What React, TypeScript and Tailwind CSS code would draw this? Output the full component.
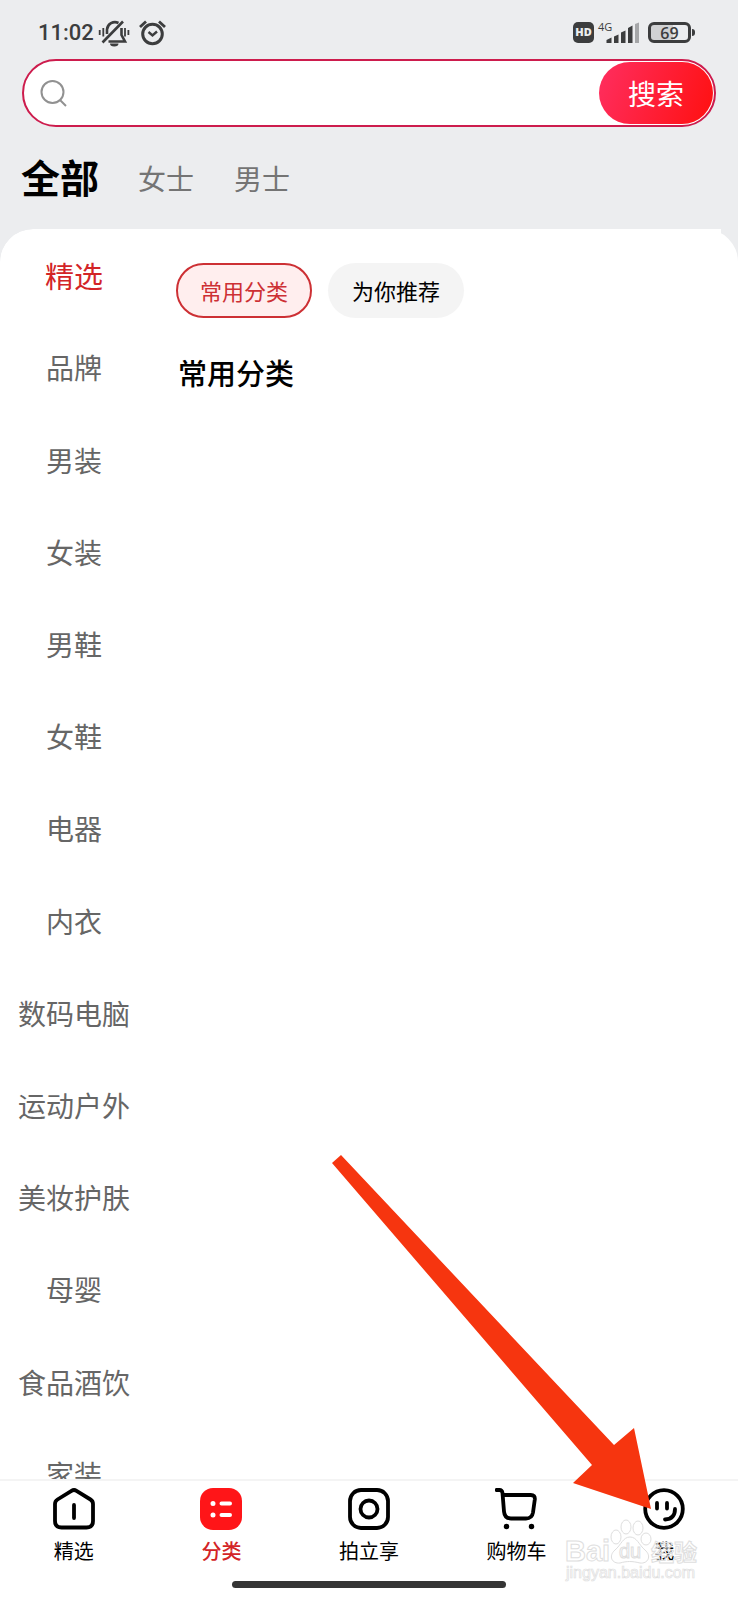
import { ReactNode } from "react";

const CATEGORIES = [
    "精选",
    "品牌",
    "男装",
    "女装",
    "男鞋",
    "女鞋",
    "电器",
    "内衣",
    "数码电脑",
    "运动户外",
    "美妆护肤",
    "母婴",
    "食品酒饮",
    "家装",
];

function StatusBar() {
    return (
        <div className="flex h-[59px] items-center justify-between pt-[6px] pr-[43px] pl-[38px] text-[#3c3d3e]">
            <div className="flex items-center">
                <span className="w-[60px] font-['Roboto'] text-[22px] leading-6 font-medium">11:02</span>
                <svg width="32" height="28" viewBox="98 18 32 28" fill="none" stroke="currentColor" strokeWidth="2.6">
                    <path d="M107 33V28.500a8 8 0 0 1 11.500-6.500M121.500 27v7l3.500 6.500h-16.500M102.500 41.500L123 20.500" />
                    <path d="M99.700 29v5M103.300 27v8.500M125 27v8.500M128.400 29v5" strokeWidth="1.8" />
                    <path d="M110 42.500h8.500a4.200 3 0 0 1-8.500 0z" fill="currentColor" stroke="none" />
                </svg>
                <svg className="ml-2" width="28" height="28" viewBox="138 18 28 28" fill="none" stroke="currentColor" strokeWidth="3">
                    <circle cx="152.500" cy="33" r="9.800" />
                    <path d="M148.500 31l4 3.500 4.500-4" strokeWidth="2.4" />
                    <path d="M140 26l6-5.500M159 20.500l6 5.500" strokeWidth="2.8" />
                </svg>
            </div>
            <div className="flex items-center">
                <span className="flex h-[21px] w-[21px] items-center justify-center rounded-[5px] bg-[#3c3d3e] font-['Open_Sans'] text-[11px] font-extrabold text-[#ecedef]">
                    HD
                </span>
                <span className="ml-1 mb-3 w-4 font-['Open_Sans'] text-[11px] leading-3 font-medium">4G</span>
                <svg className="-ml-2" width="34" height="21" viewBox="606 22 34 21" fill="currentColor">
                    <path d="M606.500 40l5-2.500V43h-5zM614 36.500l4.500-2V43H614zM621 32.500l4.500-2V43H621zM628 28l4.500-2.500V43H628z" />
                    <path d="M635 24l4-1.500V43h-4z" opacity="0.4" />
                </svg>
                <span className="ml-2 flex h-[21px] w-[43px] items-center justify-center rounded-md border-[3px] border-current bg-linear-to-r from-[#d0d1d3] from-60% to-[#ecedef] to-60% font-['Open_Sans'] text-base leading-4 font-semibold">
                    69
                </span>
                <span className="ml-px h-[7px] w-[3px] rounded-r-sm bg-[#3c3d3e]" />
            </div>
        </div>
    );
}

function SearchBar() {
    return (
        <form
            className="mx-[22px] flex h-[68px] items-center rounded-full border-2 border-[#cd1c4d] bg-white p-px pl-4"
            onSubmit={(e) => e.preventDefault()}
        >
            <svg width="28" height="28" viewBox="0 0 28 28" fill="none" stroke="#919191" strokeWidth="2">
                <circle cx="12.500" cy="13" r="11" />
                <path d="M20 21l6 6" />
            </svg>
            <input type="search" aria-label="搜索" className="h-full min-w-0 flex-1 bg-transparent px-3 text-[28px] outline-none" />
            <button
                type="submit"
                className="h-full w-[114px] rounded-full bg-linear-[110deg] from-[#ff2e60] to-[#ff1010] text-[28px] leading-8 text-white"
            >
                搜索
            </button>
        </form>
    );
}

function NavItem({ label, active = false, children }: { label: string; active?: boolean; children: ReactNode }) {
    return (
        <a
            href="#"
            className={
                active
                    ? "flex flex-1 flex-col items-center gap-[7px] text-xl leading-7 font-medium text-[#d32427]"
                    : "flex flex-1 flex-col items-center gap-[7px] text-xl leading-7 text-black"
            }
        >
            <svg width="44" height="42" viewBox="0 0 44 42" fill="none" stroke="#000" strokeWidth="3.8" strokeLinecap="round" strokeLinejoin="round">
                {children}
            </svg>
            {label}
        </a>
    );
}

function BottomNav() {
    return (
        <nav className="border-t-2 border-[#f4f4f4] bg-white pt-[7px]">
            <div className="flex">
                <NavItem label="精选">
                    <path d="M19.500 2.800L5.500 11.500Q3 13 3 16v17q0 6.500 6.500 6.500h25q6.500 0 6.500-6.500V16q0-3-2.500-4.500L24.500 2.800q-2.500-1.600-5 0z" />
                    <path d="M22 17v13" />
                </NavItem>
                <NavItem label="分类" active>
                    <rect x="1" y="0" width="42" height="42" rx="13" fill="#ff1518" stroke="none" />
                    <path d="M22.500 15.500h8.500M22.500 27h8.500" stroke="#fff" strokeWidth="4" />
                    <path d="M14 15.500h0M14 27h0" stroke="#fff" strokeWidth="5" />
                </NavItem>
                <NavItem label="拍立享">
                    <rect x="3" y="2" width="38" height="38" rx="11" />
                    <circle cx="22" cy="21" r="8.500" />
                </NavItem>
                <NavItem label="购物车">
                    <path d="M1.500 2h3q2.500 0 3 3l1.500 18.500q.6 7 7 7h15q6 0 7-6l1.800-13q.5-4.500-4-4.500H9" />
                    <path d="M11.500 38.500h0M36.500 38.500h0" strokeWidth="5.500" />
                </NavItem>
                <NavItem label="我">
                    <circle cx="22" cy="21" r="18.800" />
                    <path d="M15 15v5.500M25 15v5.500M33 21q0 10-10 10.500" />
                </NavItem>
            </div>
            <div className="mx-auto mt-4 mb-3 h-[7px] w-[37%] rounded-full bg-[#353535]" />
        </nav>
    );
}

function Watermark() {
    return (
        <svg
            className="pointer-events-none absolute right-[38px] bottom-4"
            width="136"
            height="66"
            viewBox="564 1518 136 66"
            fill="#fff"
            fillOpacity="0.5"
            stroke="#dedede"
            strokeWidth="1"
            aria-hidden="true"
        >
            <ellipse cx="616" cy="1537" rx="5" ry="7" />
            <ellipse cx="626" cy="1527" rx="5" ry="7" />
            <ellipse cx="638" cy="1528" rx="5" ry="7" />
            <ellipse cx="646" cy="1539" rx="5" ry="6" />
            <path d="M630 1537c7 0 9 8 15 13 7 6 3 14-5 13-8-2-13-2-20 0-8 1-12-7-5-13 6-5 8-13 15-13z" />
            <text x="565" y="1561" fontFamily="Liberation Sans" fontWeight="700" fontSize="29">Bai</text>
            <text x="619" y="1558" fontFamily="Liberation Sans" fontSize="20">du</text>
            <text x="651" y="1561" fontFamily="Noto Sans CJK SC" fontWeight="700" fontSize="23">经验</text>
            <text x="566" y="1578" fontFamily="Liberation Sans" fontSize="16" strokeWidth="0.7">jingyan.baidu.com</text>
        </svg>
    );
}

function PointerArrow() {
    return (
        <svg
            className="pointer-events-none absolute right-[86px] bottom-[90px]"
            width="322"
            height="356"
            viewBox="330 1154 322 356"
            fill="#f6350f"
            aria-hidden="true"
        >
            <path d="M341 1155L614 1445L634 1428L651 1509L573 1483L592 1465L332 1163z" />
        </svg>
    );
}

export default function App() {
    return (
        <div className="relative flex h-screen flex-col overflow-hidden bg-[#ecedef] font-['Noto_Sans_CJK_SC',sans-serif]">
            <StatusBar />
            <SearchBar />

            {/* Audience tabs */}
            <div className="flex h-[102px] items-center px-[21px] text-[28px] text-[#747474]">
                <button className="mr-[39px] pb-1 text-[39px] leading-10 font-bold text-black">全部</button>
                <button className="mr-10 leading-8">女士</button>
                <button className="leading-8">男士</button>
            </div>

            <main className="relative flex min-h-0 flex-1 overflow-hidden rounded-tl-[33px] bg-[#ecedef]">
                {/* White panel, with the small step in its right corner */}
                <div className="absolute inset-0 rounded-t-[33px] bg-white" />
                <div className="absolute top-0 right-[17px] h-8 w-8 bg-white" />

                {/* Category list */}
                <ul className="relative grid h-[1291px] w-[148px] shrink-0 auto-rows-fr text-[28px] leading-8 text-[#666]">
                    {CATEGORIES.map((name, i) => (
                        <li key={name} className="flex items-center justify-center">
                            <button className={i === 0 ? "text-[29px] text-[#d32427]" : ""}>{name}</button>
                        </li>
                    ))}
                </ul>

                <section className="relative flex-1 pt-[34px] pl-7">
                    <div className="flex gap-4 text-[22px] leading-6">
                        <button className="h-[55px] w-[136px] rounded-full border-2 border-[#cd3034] bg-[#ffeeee] pb-[2px] text-[#cd3034]">
                            常用分类
                        </button>
                        <button className="h-[55px] w-[136px] rounded-full bg-[#f4f4f4] pb-[2px] text-black">为你推荐</button>
                    </div>
                    <h2 className="mt-[34px] pl-[2px] text-[29px] leading-10 font-medium text-black">常用分类</h2>
                </section>
            </main>

            <BottomNav />
            <PointerArrow />
            <Watermark />
        </div>
    );
}
